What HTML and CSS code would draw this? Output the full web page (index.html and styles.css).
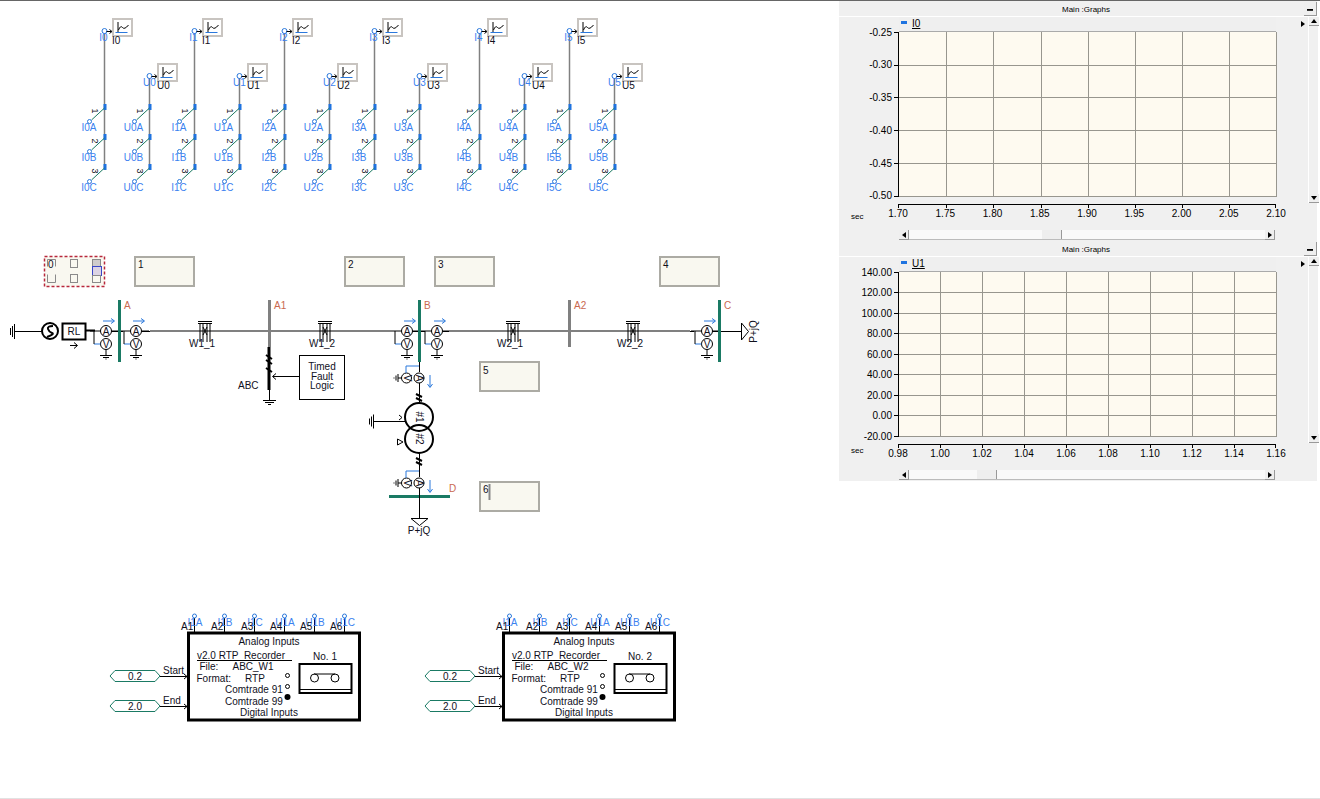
FILE: index.html
```html
<!DOCTYPE html>
<html lang="en">
<head>
<meta charset="utf-8">
<title>Main : Graphs</title>
<link rel="stylesheet" href="styles.css">
</head>
<body>
<div class="app">
<svg class="canvas" width="839" height="797" viewBox="0 1 839 797">
<defs>
  <g id="sw">
    <rect class="bl-fill" x="-1" y="-3" width="3" height="6"/>
    <line class="green" x1="0" y1="1" x2="-13" y2="13"/>
    <circle class="node" cx="-15" cy="14.5" r="2"/>
  </g>
  <g id="col-sw">
    <use href="#sw" y="107"/><use href="#sw" y="137"/><use href="#sw" y="167"/>
  </g>
  <g id="gm">
    <circle class="node" cx="0" cy="13" r="2.5"/>
    <path class="k" d="M2 13.5H7M5 11.5L7.5 13.5L5 15.5"/>
    <rect class="gmbox" x="8.5" y="1" width="19" height="17"/>
    <path class="k" d="M13.5 4V14"/>
    <path class="bl" d="M11 14.5H23"/>
    <path class="k" d="M14 12Q16 7 18 9.5T24 7"/>
  </g>
  <g id="meter">
    <circle class="mt" cx="0" cy="0" r="5.5"/>
    <circle class="mt" cx="0" cy="13" r="5.5"/>
    <path class="bl" d="M-12 13H-5.5"/>
    <path class="k" d="M-12 0V13M-16 0H-5.5M5.5 0H13M0 18.5V24M-6 24.5H6M-3 26.5H3"/>
    <path class="k" d="M-.5 28h1"/>
    <path class="bl" d="M-3 -10H8M5 -12.5L8.5 -10L5 -7.5"/>
  </g>
  <g id="ct">
    <circle class="mt" cx="-12.5" cy="0" r="5"/>
    <circle class="mt" cx="0" cy="0" r="5"/>
    <path class="bl" d="M-13 -5V-12H0"/>
    <path class="k" d="M-17.5 0H-21M-21 -4V4M-23 -2.5V2.5M-25 -.5V.5"/>
    <path class="bl" d="M11 -3V9M8.5 6L11 9.5L13.5 6"/>
  </g>
  <g id="tower">
    <path class="k" d="M-7 .5H7M-7 2.5H7M-5 2.5V21M5 2.5V21M-2 2.5V21M2 2.5V21M-2 6L2 14M2 6L-2 14"/>
  </g>
  <g id="rec">
    <rect class="recbox" x="188.5" y="633" width="171" height="87"/>
    <path class="k" d="M194.5 632V618M224.5 632V618M254.5 632V618M284.5 632V618M314.5 632V618M344.5 632V618"/>
    <circle class="node" cx="194.5" cy="616" r="2"/>
    <circle class="node" cx="224.5" cy="616" r="2"/>
    <circle class="node" cx="254.5" cy="616" r="2"/>
    <circle class="node" cx="284.5" cy="616" r="2"/>
    <circle class="node" cx="314.5" cy="616" r="2"/>
    <circle class="node" cx="344.5" cy="616" r="2"/>
    <path class="k" d="M197 660.5H292"/>
    <circle class="k" cx="287.5" cy="675.5" r="2"/>
    <circle class="k" cx="287.5" cy="686.5" r="2"/>
    <circle class="k-fill" cx="287.5" cy="697" r="3"/>
    <rect class="k2" x="299.5" y="664" width="52" height="29"/>
    <path class="k" d="M300 689.5H351M314 674H335"/>
    <circle class="k" cx="314.5" cy="678" r="4"/>
    <circle class="k" cx="335" cy="678" r="4"/>
    <path class="tag" d="M110 676L115 670.5H155L160 676L155 681.5H115Z"/>
    <path class="tag" d="M110 706L115 700.5H155L160 706L155 711.5H115Z"/>
    <path class="k" d="M160 676.5H187M184 674L187 676.5L184 679M160 706.5H187M184 704L187 706.5L184 709"/>
  </g>
</defs>

<!-- analog outputs: I/U columns -->
<g transform="translate(104.5 0)">
  <line class="gr" y1="33" y2="168"/><use href="#col-sw"/><use href="#gm" y="18"/>
  <text class="lb m" x="-1" y="41">I0</text><text class="t" x="7.5" y="44">I0</text>
  <text class="t r" transform="translate(-13 111) rotate(90)">1</text><text class="t r" transform="translate(-13 141) rotate(90)">2</text><text class="t r" transform="translate(-13 171) rotate(90)">3</text>
  <text class="lb m" x="-15.5" y="131">I0A</text><text class="lb m" x="-15.5" y="161">I0B</text><text class="lb m" x="-15.5" y="191">I0C</text>
</g>
<g transform="translate(149.5 0)">
  <line class="gr" y1="78" y2="168"/><use href="#col-sw"/><use href="#gm" y="63"/>
  <text class="lb m" x="0" y="86">U0</text><text class="t" x="7.5" y="89">U0</text>
  <text class="t r" transform="translate(-13 111) rotate(90)">1</text><text class="t r" transform="translate(-13 141) rotate(90)">2</text><text class="t r" transform="translate(-13 171) rotate(90)">3</text>
  <text class="lb m" x="-16" y="131">U0A</text><text class="lb m" x="-16" y="161">U0B</text><text class="lb m" x="-16" y="191">U0C</text>
</g>
<g transform="translate(194.5 0)">
  <line class="gr" y1="33" y2="168"/><use href="#col-sw"/><use href="#gm" y="18"/>
  <text class="lb m" x="-1" y="41">I1</text><text class="t" x="7.5" y="44">I1</text>
  <text class="t r" transform="translate(-13 111) rotate(90)">1</text><text class="t r" transform="translate(-13 141) rotate(90)">2</text><text class="t r" transform="translate(-13 171) rotate(90)">3</text>
  <text class="lb m" x="-15.5" y="131">I1A</text><text class="lb m" x="-15.5" y="161">I1B</text><text class="lb m" x="-15.5" y="191">I1C</text>
</g>
<g transform="translate(239.5 0)">
  <line class="gr" y1="78" y2="168"/><use href="#col-sw"/><use href="#gm" y="63"/>
  <text class="lb m" x="0" y="86">U1</text><text class="t" x="7.5" y="89">U1</text>
  <text class="t r" transform="translate(-13 111) rotate(90)">1</text><text class="t r" transform="translate(-13 141) rotate(90)">2</text><text class="t r" transform="translate(-13 171) rotate(90)">3</text>
  <text class="lb m" x="-16" y="131">U1A</text><text class="lb m" x="-16" y="161">U1B</text><text class="lb m" x="-16" y="191">U1C</text>
</g>
<g transform="translate(284.5 0)">
  <line class="gr" y1="33" y2="168"/><use href="#col-sw"/><use href="#gm" y="18"/>
  <text class="lb m" x="-1" y="41">I2</text><text class="t" x="7.5" y="44">I2</text>
  <text class="t r" transform="translate(-13 111) rotate(90)">1</text><text class="t r" transform="translate(-13 141) rotate(90)">2</text><text class="t r" transform="translate(-13 171) rotate(90)">3</text>
  <text class="lb m" x="-15.5" y="131">I2A</text><text class="lb m" x="-15.5" y="161">I2B</text><text class="lb m" x="-15.5" y="191">I2C</text>
</g>
<g transform="translate(329.5 0)">
  <line class="gr" y1="78" y2="168"/><use href="#col-sw"/><use href="#gm" y="63"/>
  <text class="lb m" x="0" y="86">U2</text><text class="t" x="7.5" y="89">U2</text>
  <text class="t r" transform="translate(-13 111) rotate(90)">1</text><text class="t r" transform="translate(-13 141) rotate(90)">2</text><text class="t r" transform="translate(-13 171) rotate(90)">3</text>
  <text class="lb m" x="-16" y="131">U2A</text><text class="lb m" x="-16" y="161">U2B</text><text class="lb m" x="-16" y="191">U2C</text>
</g>
<g transform="translate(374.5 0)">
  <line class="gr" y1="33" y2="168"/><use href="#col-sw"/><use href="#gm" y="18"/>
  <text class="lb m" x="-1" y="41">I3</text><text class="t" x="7.5" y="44">I3</text>
  <text class="t r" transform="translate(-13 111) rotate(90)">1</text><text class="t r" transform="translate(-13 141) rotate(90)">2</text><text class="t r" transform="translate(-13 171) rotate(90)">3</text>
  <text class="lb m" x="-15.5" y="131">I3A</text><text class="lb m" x="-15.5" y="161">I3B</text><text class="lb m" x="-15.5" y="191">I3C</text>
</g>
<g transform="translate(419.5 0)">
  <line class="gr" y1="78" y2="168"/><use href="#col-sw"/><use href="#gm" y="63"/>
  <text class="lb m" x="0" y="86">U3</text><text class="t" x="7.5" y="89">U3</text>
  <text class="t r" transform="translate(-13 111) rotate(90)">1</text><text class="t r" transform="translate(-13 141) rotate(90)">2</text><text class="t r" transform="translate(-13 171) rotate(90)">3</text>
  <text class="lb m" x="-16" y="131">U3A</text><text class="lb m" x="-16" y="161">U3B</text><text class="lb m" x="-16" y="191">U3C</text>
</g>
<g transform="translate(479.5 0)">
  <line class="gr" y1="33" y2="168"/><use href="#col-sw"/><use href="#gm" y="18"/>
  <text class="lb m" x="-1" y="41">I4</text><text class="t" x="7.5" y="44">I4</text>
  <text class="t r" transform="translate(-13 111) rotate(90)">1</text><text class="t r" transform="translate(-13 141) rotate(90)">2</text><text class="t r" transform="translate(-13 171) rotate(90)">3</text>
  <text class="lb m" x="-15.5" y="131">I4A</text><text class="lb m" x="-15.5" y="161">I4B</text><text class="lb m" x="-15.5" y="191">I4C</text>
</g>
<g transform="translate(524.5 0)">
  <line class="gr" y1="78" y2="168"/><use href="#col-sw"/><use href="#gm" y="63"/>
  <text class="lb m" x="0" y="86">U4</text><text class="t" x="7.5" y="89">U4</text>
  <text class="t r" transform="translate(-13 111) rotate(90)">1</text><text class="t r" transform="translate(-13 141) rotate(90)">2</text><text class="t r" transform="translate(-13 171) rotate(90)">3</text>
  <text class="lb m" x="-16" y="131">U4A</text><text class="lb m" x="-16" y="161">U4B</text><text class="lb m" x="-16" y="191">U4C</text>
</g>
<g transform="translate(569.5 0)">
  <line class="gr" y1="33" y2="168"/><use href="#col-sw"/><use href="#gm" y="18"/>
  <text class="lb m" x="-1" y="41">I5</text><text class="t" x="7.5" y="44">I5</text>
  <text class="t r" transform="translate(-13 111) rotate(90)">1</text><text class="t r" transform="translate(-13 141) rotate(90)">2</text><text class="t r" transform="translate(-13 171) rotate(90)">3</text>
  <text class="lb m" x="-15.5" y="131">I5A</text><text class="lb m" x="-15.5" y="161">I5B</text><text class="lb m" x="-15.5" y="191">I5C</text>
</g>
<g transform="translate(614.5 0)">
  <line class="gr" y1="78" y2="168"/><use href="#col-sw"/><use href="#gm" y="63"/>
  <text class="lb m" x="0" y="86">U5</text><text class="t" x="7.5" y="89">U5</text>
  <text class="t r" transform="translate(-13 111) rotate(90)">1</text><text class="t r" transform="translate(-13 141) rotate(90)">2</text><text class="t r" transform="translate(-13 171) rotate(90)">3</text>
  <text class="lb m" x="-16" y="131">U5A</text><text class="lb m" x="-16" y="161">U5B</text><text class="lb m" x="-16" y="191">U5C</text>
</g>

<!-- text boxes -->
<rect class="tbox sel" x="44.5" y="256.5" width="60" height="30"/>
<path class="hd" d="M47.5 266.5V259.5H55.5V266.5M47.5 274.5V282.5H55.5V274.5"/>
<rect class="hd" x="70.5" y="259.5" width="7" height="8"/>
<rect class="hd" x="70.5" y="274.5" width="7" height="8"/>
<rect class="hdf" x="92.5" y="259.5" width="8" height="7"/>
<rect class="hdb" x="92.5" y="266.5" width="9" height="9"/>
<rect class="hd" x="92.5" y="275.5" width="8" height="7"/>
<text class="t" x="48" y="268">0</text>
<rect class="tbox" x="135" y="257" width="59" height="29"/><text class="t" x="138" y="268">1</text>
<rect class="tbox" x="345" y="257" width="59" height="29"/><text class="t" x="348" y="268">2</text>
<rect class="tbox" x="435" y="257" width="59" height="29"/><text class="t" x="438" y="268">3</text>
<rect class="tbox" x="660" y="257" width="59" height="29"/><text class="t" x="663" y="268">4</text>
<rect class="tbox" x="480" y="362" width="59" height="29"/><text class="t" x="483" y="374">5</text>
<rect class="tbox" x="480" y="482" width="59" height="29"/><text class="t" x="483" y="493">6</text>
<path class="cursor" d="M489.5 484V500"/>

<!-- one-line diagram -->
<path class="line" d="M150 331H391M450 331H690"/>
<path class="k" d="M14 331.5H42M10.500 328V335M12.500 326V337M14.500 324V339"/>
<circle class="k2" cx="50" cy="331" r="8"/>
<path class="k2" d="M53 326Q47 326 48 329T52 333T47 337"/>
<rect class="k2" x="62.500" y="323.500" width="23" height="16"/>
<text class="t m" x="74" y="335">RL</text>
<path class="k2" d="M86 330.500H95"/>
<path class="k" d="M70 345.500H77M74 342.500L77.500 345.500L74 348.500"/>
<path class="k" d="M111.500 331.500H119M120 331.500H123M141.500 331.500H150M412 331.500H419M420 331.500H425M442.500 331.500H449M712 331.500H741M690 331.500H694"/>
<use href="#meter" x="106" y="331"/><text class="t m" x="106" y="335">A</text><text class="t m" x="106" y="348">V</text>
<use href="#meter" x="136" y="331"/><text class="t m" x="136" y="335">A</text><text class="t m" x="136" y="348">V</text>
<use href="#meter" x="407" y="331"/><text class="t m" x="407" y="335">A</text><text class="t m" x="407" y="348">V</text>
<use href="#meter" x="437" y="331"/><text class="t m" x="437" y="335">A</text><text class="t m" x="437" y="348">V</text>
<use href="#meter" x="707" y="331"/><text class="t m" x="707" y="335">A</text><text class="t m" x="707" y="348">V</text>

<path class="bus" d="M119.500 300V362M419.500 300V362M719.500 300V362M389 496.500H450"/>
<path class="busg" d="M269.500 300V347M569.500 300V347"/>
<text class="bn" x="124" y="309">A</text><text class="bn" x="274" y="309">A1</text>
<text class="bn" x="424" y="309">B</text><text class="bn" x="574" y="309">A2</text>
<text class="bn" x="724" y="309">C</text><text class="bn" x="449" y="492">D</text>

<use href="#tower" x="205" y="321"/><text class="t m" x="202" y="347">W1_1</text>
<use href="#tower" x="325" y="321"/><text class="t m" x="322" y="347">W1_2</text>
<use href="#tower" x="513" y="321"/><text class="t m" x="510" y="347">W2_1</text>
<use href="#tower" x="633" y="321"/><text class="t m" x="630" y="347">W2_2</text>

<path class="k3" d="M269 347V390"/>
<path class="k2" d="M266 355L272 359M266 360L272 364M266 368L272 372"/>
<path class="k" d="M269.500 390V400M263 400.500H276M265 402.500H274M268 404.500H271M273 376.500H299M276 373.500L272.500 376.500L276 379.500"/>
<text class="t" x="238" y="389">ABC</text>
<rect class="k" x="299.500" y="355.500" width="45" height="44"/>
<text class="t m" x="322" y="370">Timed</text><text class="t m" x="322" y="379.500">Fault</text><text class="t m" x="322" y="389">Logic</text>

<path class="k" d="M419.500 362V372"/>
<use href="#ct" x="419" y="378"/>
<text class="t m" transform="translate(403.500 378) rotate(90)">V</text><text class="t m" transform="translate(416 378) rotate(90)">A</text>
<path class="k" d="M419.500 383V403"/>
<path class="k2" d="M416 394L422 397M416 398L422 401"/>
<circle class="k2" cx="419" cy="417" r="14"/>
<circle class="k2" cx="419" cy="439" r="14"/>
<text class="t m" transform="translate(415.500 417) rotate(90)">#1</text>
<text class="t m" transform="translate(415.500 439) rotate(90)">#2</text>
<path class="k" d="M374 421.500H405M369.500 418.500V424.500M371.500 416.500V426.500M373.500 414.500V428.500M399 415L402 417.500L399 420M397.500 439V445L403 442Z"/>
<path class="k" d="M419.500 453V477"/>
<path class="k2" d="M416 458L422 461M416 462L422 465"/>
<use href="#ct" x="419" y="483"/>
<text class="t m" transform="translate(403.500 483) rotate(90)">V</text><text class="t m" transform="translate(416 483) rotate(90)">A</text>
<path class="k" d="M419.500 488V518M411 518.500H428L419.500 525.500Z"/>
<text class="t m" x="419" y="534">P+jQ</text>
<path class="k" d="M741.500 323V340L748.500 331.500Z"/>
<text class="t m" transform="translate(757 331.500) rotate(-90)">P+jQ</text>

<!-- recorder 1 -->
<use href="#rec"/>
<text class="lb m" x="195" y="626">I1A</text><text class="lb m" x="225" y="626">I1B</text><text class="lb m" x="255" y="626">I1C</text><text class="lb m" x="285" y="626">U1A</text><text class="lb m" x="315" y="626">U1B</text><text class="lb m" x="345" y="626">U1C</text>
<text class="t" x="181" y="630">A1</text><text class="t" x="211" y="630">A2</text><text class="t" x="241" y="630">A3</text><text class="t" x="270" y="630">A4</text><text class="t" x="300" y="630">A5</text><text class="t" x="330" y="630">A6</text>
<text class="t m" x="269" y="645">Analog Inputs</text>
<text class="t" x="197" y="659">v2.0 RTP  Recorder</text>
<text class="t" x="199.500" y="670">File:</text><text class="t" x="232.500" y="670">ABC_W1</text>
<text class="t" x="196.500" y="682">Format:</text><text class="t" x="245" y="682">RTP</text>
<text class="t" x="225" y="693">Comtrade 91</text><text class="t" x="225" y="705">Comtrade 99</text>
<text class="t m" x="269" y="716">Digital Inputs</text>
<text class="t m" x="325" y="660">No. 1</text>
<text class="t m" x="135" y="680">0.2</text><text class="t m" x="135" y="710">2.0</text>
<text class="t" x="163" y="674">Start</text><text class="t" x="163" y="704">End</text>

<!-- recorder 2 -->
<use href="#rec" x="315"/>
<text class="lb m" x="510" y="626">I1A</text><text class="lb m" x="540" y="626">I1B</text><text class="lb m" x="570" y="626">I1C</text><text class="lb m" x="600" y="626">U1A</text><text class="lb m" x="630" y="626">U1B</text><text class="lb m" x="660" y="626">U1C</text>
<text class="t" x="496" y="630">A1</text><text class="t" x="526" y="630">A2</text><text class="t" x="556" y="630">A3</text><text class="t" x="585" y="630">A4</text><text class="t" x="615" y="630">A5</text><text class="t" x="645" y="630">A6</text>
<text class="t m" x="584" y="645">Analog Inputs</text>
<text class="t" x="512" y="659">v2.0 RTP  Recorder</text>
<text class="t" x="514.500" y="670">File:</text><text class="t" x="547.500" y="670">ABC_W2</text>
<text class="t" x="511.500" y="682">Format:</text><text class="t" x="560" y="682">RTP</text>
<text class="t" x="540" y="693">Comtrade 91</text><text class="t" x="540" y="705">Comtrade 99</text>
<text class="t m" x="584" y="716">Digital Inputs</text>
<text class="t m" x="640" y="660">No. 2</text>
<text class="t m" x="450" y="680">0.2</text><text class="t m" x="450" y="710">2.0</text>
<text class="t" x="478" y="674">Start</text><text class="t" x="478" y="704">End</text>
</svg>

<div class="side">
  <section class="panel">
    <div class="title"><span></span><span class="ttext">Main :Graphs</span><span class="min"></span></div>
    <div class="main">
      <div class="ycol">
        <div class="ylabels y6"><span>-0.25</span><span>-0.30</span><span>-0.35</span><span>-0.40</span><span>-0.45</span><span>-0.50</span></div>
        <div class="sec">sec</div>
      </div>
      <div class="plotcol">
        <div class="legend"><i></i><span>I0</span></div>
        <svg class="plot" width="385" height="176">
          <rect class="bg" x="4" y="0" width="378" height="165"/>
          <path class="grid" d="M52.500 0V165M99.500 0V165M147.500 0V165M194.500 0V165M241.500 0V165M288.500 0V165M335.500 0V165M4 33.500H382M4 65.500H382M4 98.500H382M4 131.500H382M4 164.500H382"/>
          <path class="edge" d="M382.500 0V165"/>
          <path class="axis" d="M4.500 0V165M0 .5H4M0 33.500H4M0 65.500H4M0 98.500H4M0 131.500H4M0 164.500H4M4 172.500H382M4.500 172V176M52.500 172V176M99.500 172V176M147.500 172V176M194.500 172V176M241.500 172V176M288.500 172V176M335.500 172V176M381.500 172V176"/>
        </svg>
        <div class="xlabels x9"><span>1.70</span><span>1.75</span><span>1.80</span><span>1.85</span><span>1.90</span><span>1.95</span><span>2.00</span><span>2.05</span><span>2.10</span></div>
        <div class="hscroll"><b class="left"></b><div class="track"><u class="thumb t1"></u></div><b class="right"></b></div>
      </div>
      <div class="legarrow"></div>
      <div class="vscroll"><b class="up"></b><div class="vtrack"></div><b class="down"></b></div>
    </div>
  </section>
  <section class="panel">
    <div class="title"><span></span><span class="ttext">Main :Graphs</span><span class="min"></span></div>
    <div class="main">
      <div class="ycol">
        <div class="ylabels y9"><span>140.00</span><span>120.00</span><span>100.00</span><span>80.00</span><span>60.00</span><span>40.00</span><span>20.00</span><span>0.00</span><span>-20.00</span></div>
        <div class="sec">sec</div>
      </div>
      <div class="plotcol">
        <div class="legend"><i></i><span>U1</span></div>
        <svg class="plot" width="385" height="176">
          <rect class="bg" x="4" y="0" width="378" height="165"/>
          <path class="grid" d="M46.500 0V165M88.500 0V165M130.500 0V165M172.500 0V165M214.500 0V165M256.500 0V165M298.500 0V165M340.500 0V165M4 20.500H382M4 41.500H382M4 61.500H382M4 82.500H382M4 102.500H382M4 123.500H382M4 143.500H382M4 164.500H382"/>
          <path class="edge" d="M382.500 0V165"/>
          <path class="axis" d="M4.500 0V165M0 .5H4M0 20.500H4M0 41.500H4M0 61.500H4M0 82.500H4M0 102.500H4M0 123.500H4M0 143.500H4M0 164.500H4M4 172.500H382M4.500 172V176M46.500 172V176M88.500 172V176M130.500 172V176M172.500 172V176M214.500 172V176M256.500 172V176M298.500 172V176M340.500 172V176M381.500 172V176"/>
        </svg>
        <div class="xlabels x10"><span>0.98</span><span>1.00</span><span>1.02</span><span>1.04</span><span>1.06</span><span>1.08</span><span>1.10</span><span>1.12</span><span>1.14</span><span>1.16</span></div>
        <div class="hscroll"><b class="left"></b><div class="track"><u class="thumb t2"></u></div><b class="right"></b></div>
      </div>
      <div class="legarrow"></div>
      <div class="vscroll"><b class="up"></b><div class="vtrack"></div><b class="down"></b></div>
    </div>
  </section>
</div>
</div>
</body>
</html>
```
FILE: styles.css
```css
* { box-sizing: border-box; }
html, body { margin: 0; padding: 0; background: #fff; }
body { font: 10px "Liberation Sans", Arial, sans-serif; color: #000; overflow: hidden; }
.app { display: flex; width: 1320px; height: 799px; border-top: 1px solid #666; border-bottom: 1px solid #e2e2e2; }
.canvas { display: block; flex: none; }

/* diagram text */
.t, .lb, .bn { font: 10px "Liberation Sans", Arial, sans-serif; white-space: pre; }
.t { fill: #10101c; }
.lb { fill: #3b82f0; }
.bn { fill: #c9694f; }
.m { text-anchor: middle; }
.r { text-anchor: middle; font-size: 9px; }

/* diagram strokes */
.gr { stroke: #808080; stroke-width: 1.5; }
.green { stroke: #1a7a60; stroke-width: 1; }
.node { fill: none; stroke: #2a78dc; stroke-width: 1; }
.bl-fill { fill: #1f73e0; }
.k { fill: none; stroke: #000; stroke-width: 1; }
.k-fill { fill: #000; }
.k2 { fill: none; stroke: #000; stroke-width: 2; }
.k3 { fill: none; stroke: #000; stroke-width: 3; }
.bl { fill: none; stroke: #2a78dc; stroke-width: 1; }
.mt { fill: #fff; stroke: #000; stroke-width: 1; }
.gmbox { fill: #fff; stroke: #c8c4c0; stroke-width: 2; }
.line { fill: none; stroke: #808080; stroke-width: 2; }
.bus { fill: none; stroke: #1a7a64; stroke-width: 3; }
.busg { fill: none; stroke: #808080; stroke-width: 3; }
.recbox { fill: #fff; stroke: #000; stroke-width: 3; }
.tag { fill: #fff; stroke: #1a7a64; stroke-width: 1; }
.tbox { fill: #f9f8f0; stroke: #acaba4; stroke-width: 2; }
.tbox.sel { stroke: #b8283c; stroke-width: 1.500; stroke-dasharray: 3 2; }
.hd { fill: none; stroke: #8a8a8a; stroke-width: 1; }
.hdf { fill: #cfcccc; stroke: #8a8a8a; stroke-width: 1; }
.hdb { fill: #dcd4e4; stroke: #3a46c8; stroke-width: 1; }
.cursor { fill: none; stroke: #888; stroke-width: 2; }

/* graph panels */
.side { flex: none; width: 480px; padding-right: 2px; }
.panel { height: 240px; background: #f0f0f0; display: flex; flex-direction: column; }
.title { height: 16px; flex: none; display: grid; grid-template-columns: 1fr auto 1fr; align-items: center; border-bottom: 1px solid #fff; font-size: 8px; text-align: center; }
.ttext { padding: 2px 0 0 16px; }
.min { justify-self: end; width: 13px; height: 14px; margin: 1px 0 0; background: #efefef; border-right: 1px solid #999; border-bottom: 1px solid #999; display: flex; align-items: center; justify-content: center; }
.min::after { content: ""; width: 6px; height: 1px; background: #000; border-bottom: 1px solid #333; margin-top: 3px; }
.main { flex: 1; display: flex; min-height: 0; }
.ycol { flex: none; width: 55px; height: 224px; display: flex; flex-direction: column; }
.ylabels { display: flex; flex-direction: column; text-align: right; padding-right: 2px; }
.ylabels span { display: flex; align-items: center; justify-content: flex-end; }
.y6 { margin-top: -1.400px; }
.y6 span { height: 32.800px; }
.y9 { margin-top: 4.750px; }
.y9 span { height: 20.500px; }
.sec { margin-top: auto; margin-bottom: 26px; padding-left: 12px; font-size: 8px; line-height: 9px; }
.plotcol { flex: none; width: 385px; display: flex; flex-direction: column; }
.legend { height: 15px; flex: none; margin-left: 5px; width: 377px; background: #efefef; border-bottom: 1px solid #aaa; display: flex; align-items: center; gap: 5px; padding-left: 2px; }
.legend i { width: 6px; height: 3px; background: #1f73e0; margin-bottom: 4px; }
.legend span { text-decoration: underline; line-height: 12px; }
.plot { display: block; flex: none; }
.bg { fill: #fefaf0; }
.grid { fill: none; stroke: #98968e; stroke-width: 1; shape-rendering: crispEdges; }
.edge { fill: none; stroke: #98968e; stroke-width: 1; shape-rendering: crispEdges; }
.axis { fill: none; stroke: #000; stroke-width: 1; shape-rendering: crispEdges; }
.xlabels { display: flex; flex: none; height: 12px; line-height: 12px; text-align: center; }
.xlabels span { flex: 1 1 0; }
.x9 { width: 425.250px; margin-left: -19.600px; }
.x10 { width: 420px; margin-left: -17px; }
.hscroll { margin-top: auto; margin-bottom: 1px; margin-left: 5px; width: 376px; height: 10px; flex: none; display: flex; background: #f9f9f9; }
.hscroll b { flex: none; width: 10px; background: #efefef; border-right: 1px solid #999; border-bottom: 1px solid #999; position: relative; display: flex; align-items: center; justify-content: center; }
.left::after { content: ""; border: 3px solid transparent; border-right: 4px solid #000; border-left: 0; }
.right::after { content: ""; border: 3px solid transparent; border-left: 4px solid #000; border-right: 0; }
.track { flex: 1; display: flex; background: #f9f9f9; border-bottom: 1px solid #bbb; }
.thumb { display: block; width: 20px; height: 9px; background: #eeeeee; border-right: 1px solid #999; }
.t1 { margin-left: 133px; }
.t2 { margin-left: 68px; }
.legarrow { flex: none; width: 0; height: 0; margin: 4px 3px 0 22px; border: 3px solid transparent; border-left: 4px solid #000; border-right: 0; }
.vscroll { flex: none; width: 11px; height: 186px; display: flex; flex-direction: column; border-left: 1px solid #fff; }
.vscroll b { flex: none; height: 9px; background: #efefef; border-bottom: 1px solid #999; display: flex; align-items: center; justify-content: center; }
.up::after { content: ""; border: 3px solid transparent; border-bottom: 4px solid #000; border-top: 0; }
.down::after { content: ""; border: 3px solid transparent; border-top: 4px solid #000; border-bottom: 0; }
.vtrack { flex: 1; background: #f0f0f0; border-right: 1px solid #fff; }
```
